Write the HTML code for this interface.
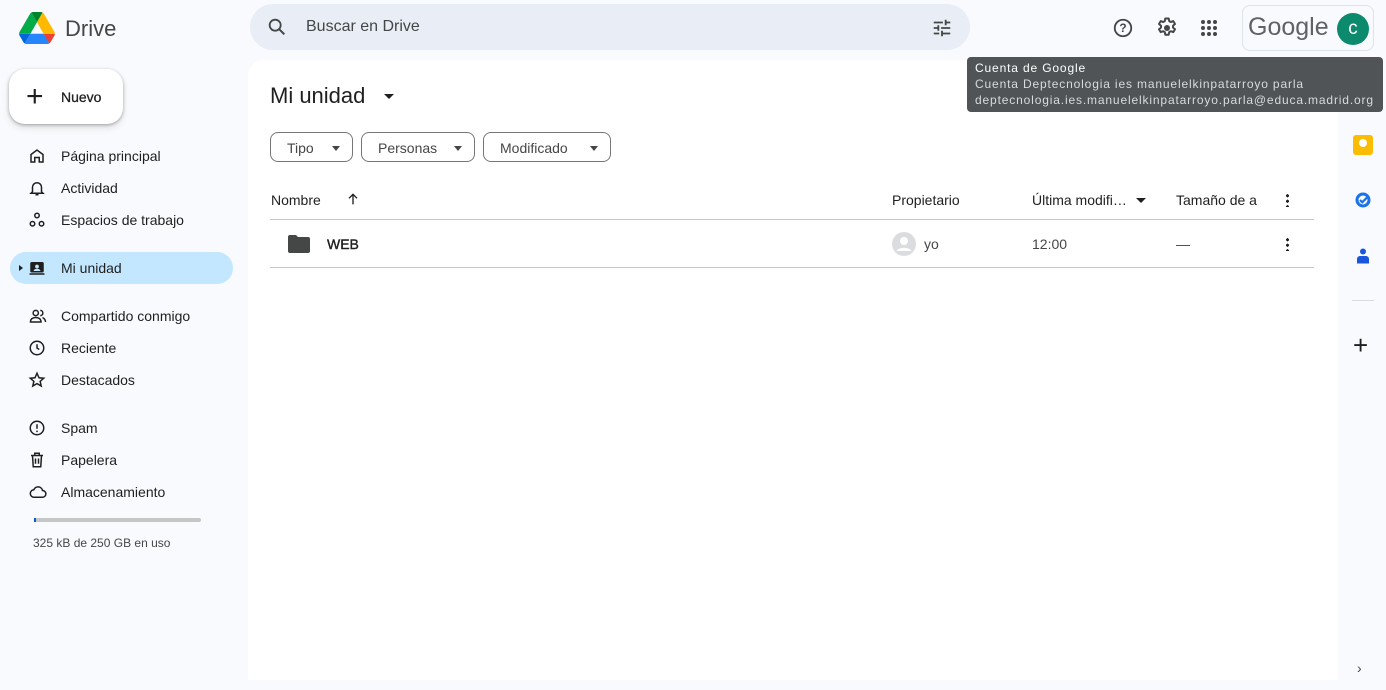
<!DOCTYPE html><html><head><style>
body{margin:0;width:1386px;height:690px;background:#f8fafd;font-family:"Liberation Sans",sans-serif;color:#1f1f1f;position:relative;overflow:hidden}
.a{position:absolute}
.nav{position:absolute;left:0;width:240px;font-size:14px;color:#1f1f1f}
.nav div{position:absolute;left:61px}
.nav svg{position:absolute;left:28px}
.chip{position:absolute;top:132px;height:30px;border:1px solid #747775;border-radius:8px;font-size:14px;line-height:30px;padding-left:16px;box-sizing:border-box;color:#444746}
.chip:after{content:"";position:absolute;right:12px;top:13px;border:4px solid transparent;border-top:5px solid #444746}
</style></head><body>
<svg class="a" style="left:18px;top:12px" width="38" height="32" viewBox="0 0 87.3 78"><path d="m6.6 66.85 3.85 6.65c.8 1.4 1.950 2.5 3.3 3.3l13.75-23.8h-27.5c0 1.55.4 3.1 1.2 4.5z" fill="#0066da"/><path d="m43.65 25-13.75-23.8c-1.35.8-2.5 1.9-3.3 3.3l-25.4 44a9.06 9.06 0 0 0 -1.2 4.5h27.5z" fill="#00ac47"/><path d="m73.55 76.8c1.35-.8 2.5-1.9 3.3-3.3l1.6-2.75 7.65-13.25c.8-1.4 1.2-2.95 1.2-4.5h-27.502l5.852 11.5z" fill="#ea4335"/><path d="m43.65 25 13.750-23.8c-1.35-.8-2.9-1.2-4.5-1.2h-18.5c-1.6 0-3.15.45-4.5 1.2z" fill="#00832d"/><path d="m59.8 53h-32.3l-13.75 23.8c1.35.8 2.9 1.2 4.5 1.2h50.8c1.6 0 3.15-.45 4.5-1.2z" fill="#2684fc"/><path d="m73.4 26.5-12.7-22c-.8-1.4-1.95-2.5-3.3-3.3l-13.75 23.8 16.15 28h27.45c0-1.55-.4-3.1-1.2-4.5z" fill="#ffba00"/></svg>
<div class="a" style="left:65px;top:16px;font-size:22px;color:#444746">Drive</div>
<div class="a" style="left:250px;top:4px;width:720px;height:46px;border-radius:24px;background:#e9eef6"></div>
<svg class="a" style="left:266px;top:16px" width="22" height="22" viewBox="0 0 24 24"><circle cx="10" cy="10" r="6" fill="none" stroke="#444746" stroke-width="2"/><path d="M14.5 14.5 20 20" stroke="#444746" stroke-width="2.2"/></svg>
<div class="a" style="left:306px;top:18px;font-size:16px;color:#444746">Buscar en Drive</div>
<svg class="a" style="left:931px;top:17px" width="22" height="22" viewBox="0 0 24 24" fill="#444746"><path d="M3 17v2h6v-2H3zM3 5v2h10V5H3zm10 16v-2h8v-2h-8v-2h-2v6h2zM7 9v2H3v2h4v2h2V9H7zm14 4v-2H11v2h10zm-6-4h2V7h4V5h-4V3h-2v6z"/></svg>
<svg class="a" style="left:1112px;top:17px" width="22" height="22" viewBox="0 0 24 24"><circle cx="12" cy="12" r="9" fill="none" stroke="#444746" stroke-width="2"/><text x="12" y="16.5" font-size="13" font-weight="bold" text-anchor="middle" fill="#444746" font-family="Liberation Sans">?</text></svg>
<svg class="a" style="left:1155px;top:16px" width="24" height="24" viewBox="0 0 24 24"><path d="M10.3 2.5h3.4l.5 2.6 1.6.9 2.5-.9 1.7 2.9-2 1.7v1.8l2 1.7-1.7 2.9-2.5-.9-1.6.9-.5 2.6h-3.4l-.5-2.6-1.6-.9-2.5.9-1.7-2.9 2-1.7V9.7l-2-1.7 1.7-2.9 2.5.9 1.6-.9z" fill="none" stroke="#444746" stroke-width="2" stroke-linejoin="round"/><circle cx="12" cy="12" r="3" fill="#444746"/></svg>
<svg class="a" style="left:1200px;top:19px" width="18" height="18" viewBox="0 0 18 18" fill="#444746"><circle cx="3" cy="3" r="2"/><circle cx="9" cy="3" r="2"/><circle cx="15" cy="3" r="2"/><circle cx="3" cy="9" r="2"/><circle cx="9" cy="9" r="2"/><circle cx="15" cy="9" r="2"/><circle cx="3" cy="15" r="2"/><circle cx="9" cy="15" r="2"/><circle cx="15" cy="15" r="2"/></svg>
<div class="a" style="left:1242px;top:5px;width:132px;height:46px;border:1px solid #dde3ea;border-radius:8px;box-sizing:border-box"></div>
<div class="a" style="left:1248px;top:13px;font-size:25px;color:#5f6368">Google</div>
<div class="a" style="left:1337px;top:13px;width:32px;height:32px;border-radius:50%;background:#0b8a6e;color:#fff;font-size:19px;text-align:center;line-height:32px">c</div>
<div class="a" style="left:9px;top:69px;width:114px;height:55px;background:#fff;border-radius:16px;box-shadow:0 1px 3px rgba(0,0,0,.3),0 4px 8px rgba(0,0,0,.1)"></div>
<div class="a" style="left:26px;top:80px;font-size:30px;font-weight:300">+</div>
<div class="a" style="left:61px;top:89px;font-size:14px;color:#1f1f1f;-webkit-text-stroke:.3px #1f1f1f">Nuevo</div>
<div class="a" style="left:10px;top:252px;width:223px;height:32px;border-radius:16px;background:#c2e7ff"></div>
<div class="nav" style="top:0">
<svg style="top:147px" width="18" height="18" viewBox="0 0 24 24"><path d="M4 10 12 4l8 6v10h-5v-6H9v6H4z" fill="none" stroke="#1f1f1f" stroke-width="2"/></svg><div style="top:148px">Página principal</div>
<svg style="top:179px" width="18" height="18" viewBox="0 0 24 24"><path d="M6 17V11a6 6 0 0 1 12 0v6l2 2H4zM10 21h4" fill="none" stroke="#1f1f1f" stroke-width="2"/></svg><div style="top:180px">Actividad</div>
<svg style="top:211px" width="18" height="18" viewBox="0 0 24 24" fill="none" stroke="#1f1f1f" stroke-width="2"><circle cx="12" cy="6" r="3"/><circle cx="6" cy="17" r="3"/><circle cx="18" cy="17" r="3"/></svg><div style="top:212px">Espacios de trabajo</div>
<svg style="top:259px" width="18" height="18" viewBox="0 0 24 24"><rect x="3" y="4" width="18" height="14" rx="2" fill="#1f1f1f"/><rect x="2" y="19" width="20" height="2" fill="#1f1f1f"/><circle cx="12" cy="10" r="2.5" fill="#c2e7ff"/><path d="M7.5 16a4.5 3 0 0 1 9 0z" fill="#c2e7ff"/></svg><div style="top:260px">Mi unidad</div>
<div style="left:19px;top:265px;width:0;height:0;border:3px solid transparent;border-left:4px solid #1f1f1f"></div>
<svg style="top:307px" width="20" height="18" viewBox="0 0 24 24" fill="none" stroke="#1f1f1f" stroke-width="2"><circle cx="9" cy="8" r="3.5"/><path d="M2 20c0-4 3-6 7-6s7 2 7 6zM15 4.5a3.5 3.5 0 0 1 0 7M18 14c2 1 4 2.5 4 6"/></svg><div style="top:308px">Compartido conmigo</div>
<svg style="top:339px" width="18" height="18" viewBox="0 0 24 24" fill="none" stroke="#1f1f1f" stroke-width="2"><circle cx="12" cy="12" r="9"/><path d="M12 7v5l3 2"/></svg><div style="top:340px">Reciente</div>
<svg style="top:371px" width="18" height="18" viewBox="0 0 24 24" fill="none" stroke="#1f1f1f" stroke-width="2"><path d="M12 3l2.7 6 6.3.6-4.8 4.2 1.4 6.2L12 16.8 6.4 20l1.4-6.2L3 9.6 9.3 9z"/></svg><div style="top:372px">Destacados</div>
<svg style="top:419px" width="18" height="18" viewBox="0 0 24 24" fill="none" stroke="#1f1f1f" stroke-width="2"><circle cx="12" cy="12" r="9"/><path d="M12 7v6M12 15.5v2"/></svg><div style="top:420px">Spam</div>
<svg style="top:451px" width="18" height="18" viewBox="0 0 24 24" fill="none" stroke="#1f1f1f" stroke-width="2"><path d="M4 6h16M9 6V3h6v3M6 6l1 15h10l1-15M10 10v7M14 10v7"/></svg><div style="top:452px">Papelera</div>
<svg style="top:483px" width="20" height="18" viewBox="0 0 24 24" fill="none" stroke="#1f1f1f" stroke-width="2"><path d="M7 19a5 5 0 0 1-.5-10A6 6 0 0 1 18 10a4.5 4.5 0 0 1 0 9z"/></svg><div style="top:484px">Almacenamiento</div>
</div>
<div class="a" style="left:34px;top:518px;width:167px;height:4px;background:#c4c7c5;border-radius:2px"></div>
<div class="a" style="left:34px;top:518px;width:2px;height:4px;background:#0b57d0"></div>
<div class="a" style="left:33px;top:536px;font-size:12px;color:#444746">325 kB de 250 GB en uso</div>
<div class="a" style="left:248px;top:60px;width:1090px;height:620px;background:#fff;border-radius:16px 16px 0 0"></div>
<div class="a" style="left:270px;top:83px;font-size:22px;color:#1f1f1f">Mi unidad</div>
<div class="a" style="left:384px;top:94px;border:5px solid transparent;border-top:5px solid #1f1f1f"></div>
<div class="chip" style="left:270px;width:83px">Tipo</div>
<div class="chip" style="left:361px;width:114px">Personas</div>
<div class="chip" style="left:483px;width:128px">Modificado</div>
<div class="a" style="left:271px;top:192px;font-size:14px">Nombre</div>
<svg class="a" style="left:345px;top:191px" width="16" height="16" viewBox="0 0 24 24"><path d="M12 20V5M6 11l6-6 6 6" fill="none" stroke="#1f1f1f" stroke-width="2"/></svg>
<div class="a" style="left:892px;top:192px;font-size:14px">Propietario</div>
<div class="a" style="left:1032px;top:192px;font-size:14px">Última modifi…</div>
<div class="a" style="left:1136px;top:198px;border:5px solid transparent;border-top:5px solid #1f1f1f"></div>
<div class="a" style="left:1176px;top:192px;font-size:14px">Tamaño de a</div>
<div class="a" style="left:1286px;top:193px;width:3px;height:14px;background:radial-gradient(circle,#1f1f1f 1.5px,transparent 1.6px) 0 0/3px 5.5px"></div>
<div class="a" style="left:270px;top:219px;width:1044px;height:1px;background:#c4c7c5"></div>
<div class="a" style="left:270px;top:267px;width:1044px;height:1px;background:#c4c7c5"></div>
<svg class="a" style="left:288px;top:235px" width="22" height="18" viewBox="0 0 22 18"><path d="M0 2a2 2 0 0 1 2-2h6l2 2h10a2 2 0 0 1 2 2v12a2 2 0 0 1-2 2H2a2 2 0 0 1-2-2z" fill="#444746"/></svg>
<div class="a" style="left:327px;top:236px;font-size:14px;-webkit-text-stroke:.4px #1f1f1f">WEB</div>
<svg class="a" style="left:892px;top:232px" width="24" height="24" viewBox="0 0 24 24"><circle cx="12" cy="12" r="12" fill="#dadce0"/><circle cx="12" cy="9" r="4" fill="#fff"/><path d="M4.5 19a8 5 0 0 1 15 0" fill="#fff"/></svg>
<div class="a" style="left:924px;top:236px;font-size:14px;color:#444746">yo</div>
<div class="a" style="left:1032px;top:236px;font-size:14px;color:#444746">12:00</div>
<div class="a" style="left:1176px;top:236px;font-size:14px;color:#444746">—</div>
<div class="a" style="left:1286px;top:237px;width:3px;height:14px;background:radial-gradient(circle,#1f1f1f 1.5px,transparent 1.6px) 0 0/3px 5.5px"></div>
<div class="a" style="left:1353px;top:135px;width:20px;height:20px;border-radius:3px;background:#fbbc04"></div>
<div class="a" style="left:1359px;top:139px;width:8px;height:8px;border-radius:50%;background:#fff"></div>
<svg class="a" style="left:1354px;top:191px" width="18" height="18" viewBox="0 0 24 24"><circle cx="12" cy="12" r="8" fill="none" stroke="#1a73e8" stroke-width="4"/><path d="M8 12l3 3 8-8" fill="none" stroke="#1a73e8" stroke-width="3"/></svg>
<svg class="a" style="left:1354px;top:247px" width="18" height="18" viewBox="0 0 24 24" fill="#1a56db"><circle cx="12" cy="6" r="4"/><path d="M4 22v-6a4 4 0 0 1 4-4h8a4 4 0 0 1 4 4v6z"/></svg>
<div class="a" style="left:1352px;top:300px;width:22px;height:1px;background:#dadce0"></div>
<div class="a" style="left:1353px;top:330px;font-size:26px;font-weight:300;color:#1f1f1f">+</div>
<div class="a" style="left:1357px;top:660px;font-size:14px;color:#444746">›</div>
<div class="a" style="left:967px;top:57px;width:416px;height:55px;background:#505457;border-radius:4px;font-size:12px;letter-spacing:.85px;line-height:16px;padding:3px 8px;box-sizing:border-box">
<div style="color:#fff">Cuenta de Google</div>
<div style="color:#d8dadc">Cuenta Deptecnologia ies manuelelkinpatarroyo parla</div>
<div style="color:#d8dadc;white-space:nowrap">deptecnologia.ies.manuelelkinpatarroyo.parla@educa.madrid.org</div>
</div>
</body></html>
